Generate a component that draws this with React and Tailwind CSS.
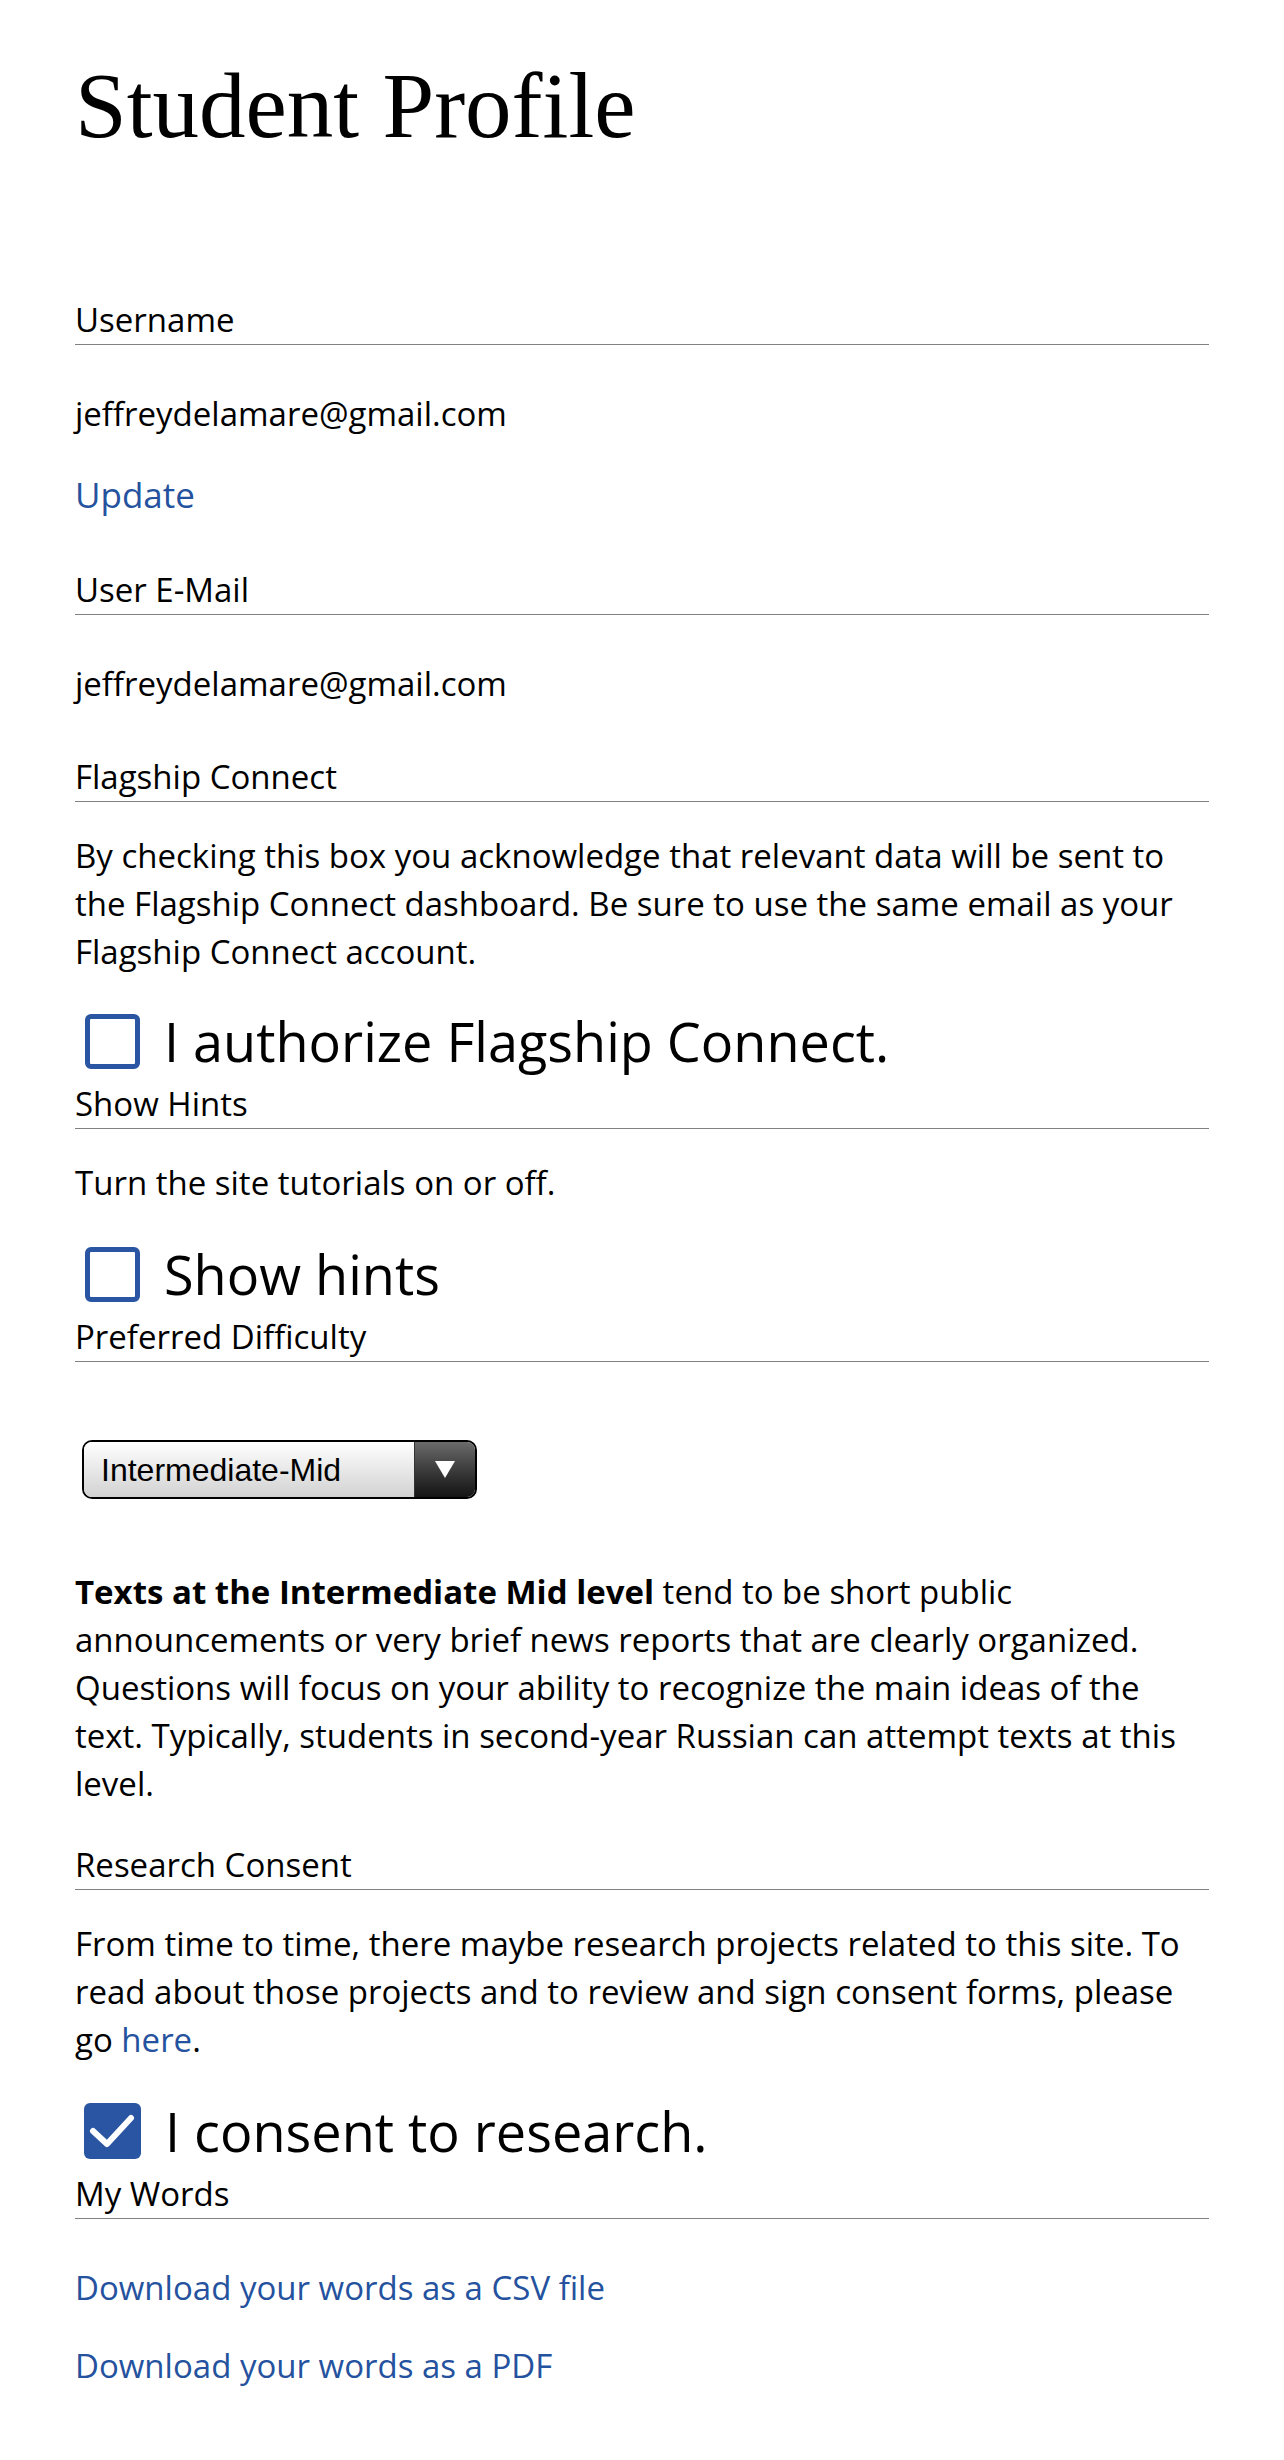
import React from "react";

function Label({ children, className = "" }) {
  return (
    <div className={`text-[33px] leading-[48px] border-b border-[#808080] text-black ${className}`}>
      {children}
    </div>
  );
}

function Check({ checked, label, className = "" }) {
  return (
    <div className={`flex items-center h-[78px] ${className}`}>
      {checked ? (
        <div className="ml-[9px] w-[57px] h-[56px] rounded-[6px] bg-[#2a55a3] flex items-center justify-center shrink-0">
          <svg viewBox="0 0 57 56" className="w-[57px] h-[56px]">
            <path d="M9 28 L23 41 L47 15" fill="none" stroke="#fff" strokeWidth="6" strokeLinecap="round" strokeLinejoin="round" />
          </svg>
        </div>
      ) : (
        <div className="ml-[10px] w-[55px] h-[55px] rounded-[6px] border-[5px] border-[#2a55a3] bg-white shrink-0" />
      )}
      <span className="ml-[24px] text-[54px] leading-[78px] text-black whitespace-nowrap">{label}</span>
    </div>
  );
}

export default function App() {
  return (
    <div className="min-h-[2460px] bg-white px-[75px] pt-[60px] font-['Open_Sans',sans-serif] text-black">
      <h1 className="font-['Liberation_Serif',serif] text-[93px] leading-[92px] font-normal">Student Profile</h1>

      <Label className="mt-[144px]">Username</Label>
      <p className="mt-[45px] text-[33px] leading-[48px]">jeffreydelamare@gmail.com</p>
      <a href="#" className="block mt-[33px] text-[35px] leading-[48px] text-[#25529e]">Update</a>

      <Label className="mt-[47px]">User E-Mail</Label>
      <p className="mt-[45px] text-[33px] leading-[48px]">jeffreydelamare@gmail.com</p>

      <Label className="mt-[45px]">Flagship Connect</Label>
      <p className="mt-[30px] text-[33px] leading-[48px]">
        By checking this box you acknowledge that relevant data will be sent to the Flagship Connect dashboard. Be sure to use the same email as your Flagship Connect account.
      </p>
      <Check className="mt-[26px]" label="I authorize Flagship Connect." />

      <Label>Show Hints</Label>
      <p className="mt-[30px] text-[33px] leading-[48px]">Turn the site tutorials on or off.</p>
      <Check className="mt-[28px]" label="Show hints" />

      <Label>Preferred Difficulty</Label>
      <div className="mt-[78px] ml-[7px] w-[395px] h-[59px] rounded-[10px] border-2 border-black overflow-hidden flex">
        <div className="flex-1 flex items-center pl-[17px] bg-gradient-to-b from-[#ffffff] to-[#d2d2d2] font-['Liberation_Sans',Arial,sans-serif] text-[32px] text-black">
          Intermediate-Mid
        </div>
        <div className="w-[61px] bg-gradient-to-b from-[#6b6b6b] to-[#141414] flex items-center justify-center border-l border-[#333]">
          <svg viewBox="0 0 20 17" className="w-[20px] h-[17px]">
            <path d="M0 0 H20 L10 17 Z" fill="#fff" />
          </svg>
        </div>
      </div>

      <p className="mt-[69px] text-[33px] leading-[48px]">
        <span className="font-bold">Texts at the Intermediate Mid level</span> tend to be short public announcements or very brief news reports that are clearly organized. Questions will focus on your ability to recognize the main ideas of the text. Typically, students in second-year Russian can attempt texts at this level.
      </p>

      <Label className="mt-[33px]">Research Consent</Label>
      <p className="mt-[30px] text-[33px] leading-[48px]">
        From time to time, there maybe research projects related to this site. To read about those projects and to review and sign consent forms, please go{" "}
        <a href="#" className="text-[#25529e]">here</a>.
      </p>
      <Check checked className="mt-[28px]" label="I consent to research." />

      <Label>My Words</Label>
      <a href="#" className="block mt-[45px] text-[33px] leading-[48px] text-[#25529e]">Download your words as a CSV file</a>
      <a href="#" className="block mt-[30px] text-[33px] leading-[48px] text-[#25529e]">Download your words as a PDF</a>
    </div>
  );
}
